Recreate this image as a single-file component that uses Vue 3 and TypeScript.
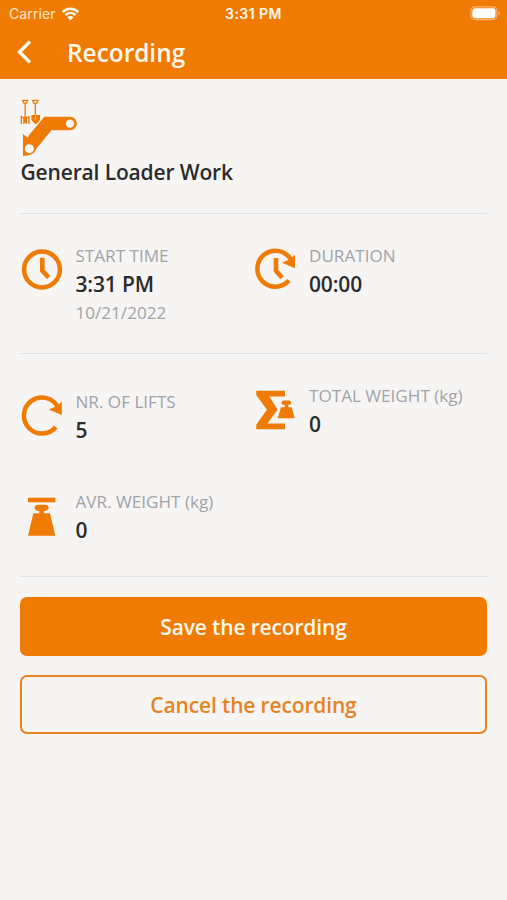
<script setup lang="ts">
interface Stat {
  icon: 'clock' | 'duration' | 'lifts' | 'total' | 'average'
  label: string
  value: string
  note?: string
}

const timing: Stat[] = [
  { icon: 'clock', label: 'START TIME', value: '3:31 PM', note: '10/21/2022' },
  { icon: 'duration', label: 'DURATION', value: '00:00' },
]

const lifting: Stat[] = [
  { icon: 'lifts', label: 'NR. OF LIFTS', value: '5' },
  { icon: 'total', label: 'TOTAL WEIGHT (kg)', value: '0' },
  { icon: 'average', label: 'AVR. WEIGHT (kg)', value: '0' },
]

const groups = [
  { name: 'timing', stats: timing },
  { name: 'lifting', stats: lifting },
]
</script>

<template>
  <div class="screen">
    <header class="header">
      <div class="status">
        <div class="carrier">
          <span>Carrier</span>
          <svg class="wifi" viewBox="0 0 18 14">
            <path d="M1.2 5.1C5.7.7 12.3.7 16.8 5.1M4 8C7 5.2 11 5.2 14 8" fill="none" stroke="currentColor" stroke-width="2.500" />
            <path d="M9 13.5L5.8 10.2C7.6 8.6 10.4 8.6 12.2 10.2Z" fill="currentColor" />
          </svg>
        </div>
        <span class="time">3:31 PM</span>
        <svg class="battery" viewBox="0 0 31 15">
          <rect x=".9" y=".9" width="26" height="12.7" rx="4" fill="none" stroke="#fff" stroke-opacity=".45" stroke-width="1.1" />
          <rect x="2.3" y="2.3" width="23.2" height="9.9" rx="2.6" fill="#fff" />
          <path d="M28.6 5v4.6c1.8-.8 1.8-3.8 0-4.6z" fill="#fff" fill-opacity=".45" />
        </svg>
      </div>
      <div class="nav">
        <svg class="back" viewBox="0 0 18 26">
          <path d="M14 2.500L3.500 13l10.500 10.500" fill="none" stroke="currentColor" stroke-width="3.400" />
        </svg>
        <h1 class="title">Recording</h1>
      </div>
    </header>

    <main class="content">
      <section class="work">
        <svg class="loader" viewBox="30 24 180 180">
          <path d="M103 80H180A20.5 20.5 0 0 1 180 121H124L78 178Q72 194 50 197H39V132L53 143L58 134Z" fill="#ef7b05" />
          <circle cx="180" cy="101" r="12.5" fill="#f8f7f6" />
          <circle cx="58" cy="176" r="13.5" fill="#f8f7f6" />
          <g fill="none" stroke="#ef7b05" stroke-width="4">
            <path d="M38 31H53L49 40H42ZM45.500 40V99M34 77V102M41.500 82V101M49.500 82V101M57 77V102M33 82H58" />
            <path d="M68 31H84L80 40H72ZM76 40V76" />
          </g>
          <path d="M64 75H90V88Q87 98 77 103Q67 98 64 88Z" fill="#ef7b05" />
          <path d="M76.500 75V89" stroke="#f8f7f6" stroke-width="1.500" />
        </svg>
        <h2 class="work-name">General Loader Work</h2>
      </section>

      <section v-for="group in groups" :key="group.name" class="stats" :class="group.name">
        <div v-for="stat in group.stats" :key="stat.label" class="stat" :class="stat.icon">
          <svg v-if="stat.icon === 'clock'" class="icon" viewBox="0 0 44 44">
            <circle cx="22" cy="21.500" r="17.900" fill="none" stroke="#ef7b05" stroke-width="4.500" />
            <path d="M22.300 9.800V22.500L28.600 29.500" fill="none" stroke="#ef7b05" stroke-width="4.600" />
          </svg>
          <svg v-else-if="stat.icon === 'duration'" class="icon" viewBox="0 .2 44 44">
            <path d="M37 12A18 18 0 1 0 34.900 32.800" fill="none" stroke="#ef7b05" stroke-width="4.500" />
            <path d="M41 7V20.500L28 15L36 11.500Z" fill="#ef7b05" />
            <path d="M22 10.300V23L28.200 30" fill="none" stroke="#ef7b05" stroke-width="4.600" />
          </svg>
          <svg v-else-if="stat.icon === 'lifts'" class="icon" viewBox="0 0 44 44">
            <path d="M37.500 12.500A18 18 0 1 0 35.800 33" fill="none" stroke="#ef7b05" stroke-width="4.500" />
            <path d="M41.800 7.500V21L28.800 15.500L37 12Z" fill="#ef7b05" />
          </svg>
          <svg v-else-if="stat.icon === 'total'" class="icon" viewBox="27 24.500 132 132" fill="#ef7b05">
            <path d="M34 33H120V50H73L98 90L67 131H120V148H34V134L66 90L34 46Z" />
            <path d="M108 82H119V75H112Q107 66 114 62H134Q141 66 136 75H130V82H140L149 115H98Z" stroke="#f8f7f6" stroke-width="2" paint-order="stroke" />
          </svg>
          <svg v-else class="icon" viewBox="30 28 132 132" fill="#ef7b05">
            <rect x="54" y="39" width="82" height="14" />
            <path d="M70 86H88V80Q74 77 74 69Q74 60 85 60H105Q116 60 116 69Q116 77 102 80V86H120L136 153H54Z" />
          </svg>
          <div class="text">
            <span class="label">{{ stat.label }}</span>
            <strong class="value">{{ stat.value }}</strong>
            <span v-if="stat.note" class="label">{{ stat.note }}</span>
          </div>
        </div>
      </section>

      <div class="actions">
        <button class="button primary" type="button">Save the recording</button>
        <button class="button outline" type="button">Cancel the recording</button>
      </div>
    </main>
  </div>
</template>

<style>
body {
  background: #f6f5f4;
}
</style>

<style scoped>
.screen {
  min-height: 900px;
  background: #f6f5f4;
  color: #2b2b2b;
  font-family: 'Open Sans', 'Noto Sans', sans-serif;
}

.header {
  box-sizing: border-box;
  height: 79px;
  background: #ef7b05;
  color: #fff8ec;
}

.status {
  display: grid;
  grid-template-columns: 1fr auto 1fr;
  align-items: center;
  height: 27px;
  padding: 0 6px 0 9px;
  font-family: Inter, 'Liberation Sans', sans-serif;
  font-size: 14px;
}

.carrier {
  display: flex;
  align-items: center;
  gap: 5px;
  color: #ffe6c8;
  letter-spacing: 0.1px;
}

.wifi {
  width: 19px;
  height: 14px;
  color: #fff8ec;
}

.time {
  margin-right: 3px;
  font-weight: 600;
  letter-spacing: 0.45px;
}

.battery {
  justify-self: end;
  width: 31px;
  height: 15px;
}

.nav {
  display: flex;
  align-items: center;
  gap: 33px;
  height: 50px;
  padding-left: 16px;
}

.back {
  width: 18px;
  height: 26px;
}

.title {
  margin: 0;
  font-size: 24.4px;
  font-weight: 600;
  line-height: 51px;
}

.content {
  padding: 0 20px;
}

.work {
  box-sizing: border-box;
  height: 135px;
  padding-top: 19px;
  border-bottom: 1px solid #e2e2e2;
}

.loader {
  display: block;
  width: 60px;
  height: 60px;
}

.work-name {
  margin: 0;
  padding-left: 0.5px;
  font-size: 21px;
  font-weight: 600;
  letter-spacing: -0.15px;
  line-height: 28px;
}

.stats {
  box-sizing: border-box;
  display: grid;
  grid-template-columns: 1fr 1fr;
  align-items: start;
  border-bottom: 1px solid #e2e2e2;
}

.timing {
  height: 140px;
  padding-top: 28px;
}

.lifting {
  grid-template-rows: 106px auto;
  height: 223px;
  padding-top: 28px;
}

.stat {
  display: flex;
  gap: 11.5px;
}

.icon {
  flex: none;
  width: 44px;
  height: 44px;
  margin-top: 6px;
}

.lifts {
  padding-top: 6px;
}

.text {
  display: flex;
  flex-direction: column;
  white-space: nowrap;
}

.label {
  color: #a1a3a9;
  font-size: 17.1px;
  line-height: 28.5px;
}

.value {
  padding-bottom: 1px;
  font-size: 21px;
  font-weight: 600;
  letter-spacing: -0.15px;
  line-height: 27.5px;
}

.actions {
  display: flex;
  flex-direction: column;
  gap: 19px;
  padding-top: 20px;
}

.button {
  box-sizing: border-box;
  height: 59px;
  padding: 0;
  border: 2px solid #ef7b05;
  border-radius: 7px;
  font: inherit;
  font-size: 21px;
  font-weight: 600;
  letter-spacing: -0.15px;
}

.primary {
  background: #ef7b05;
  color: #fff8ec;
}

.outline {
  border-color: #e58322;
  background: transparent;
  color: #e58322;
}
</style>
